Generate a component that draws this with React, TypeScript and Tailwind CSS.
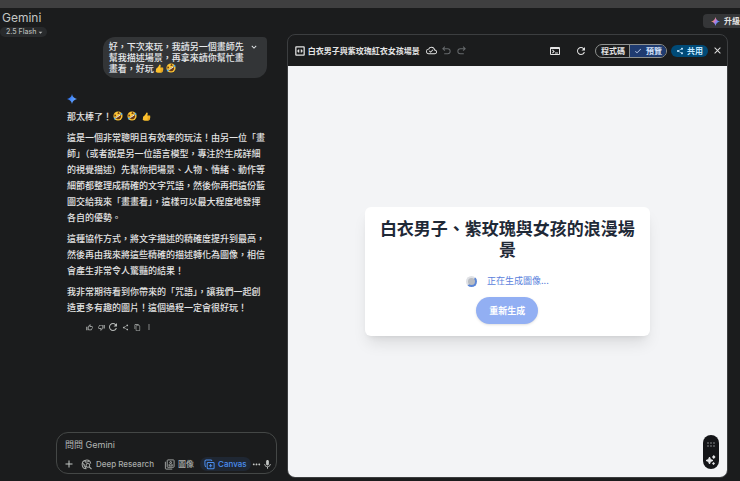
import type { ReactNode } from "react";
import {
	MdAdd,
	MdArrowDropDown,
	MdCheck,
	MdClose,
	MdContentCopy,
	MdKeyboardArrowDown,
	MdMic,
	MdMoreHoriz,
	MdMoreVert,
	MdOutlineCloudDone,
	MdOutlineTerminal,
	MdOutlineThumbDown,
	MdOutlineThumbUp,
	MdRefresh,
	MdShare,
} from "react-icons/md";

const paragraphs = [
	"這是一個非常聰明且有效率的玩法！由另一位「畫師」（或者說是另一位語言模型，專注於生成詳細的視覺描述）先幫你把場景、人物、情緒、動作等細節都整理成精確的文字咒語，然後你再把這份藍圖交給我來「畫畫看」，這樣可以最大程度地發揮各自的優勢。",
	"這種協作方式，將文字描述的精確度提升到最高，然後再由我來將這些精確的描述轉化為圖像，相信會產生非常令人驚豔的結果！",
	"我非常期待看到你帶來的「咒語」，讓我們一起創造更多有趣的圖片！這個過程一定會很好玩！",
];

const replyActions: { label: string; icon: ReactNode }[] = [
	{ label: "喜歡", icon: <MdOutlineThumbUp className="size-[7px]" /> },
	{ label: "不喜歡", icon: <MdOutlineThumbDown className="size-[7px]" /> },
	{ label: "重做", icon: <MdRefresh className="size-3 shrink-0" /> },
	{ label: "分享", icon: <MdShare className="size-[7px]" /> },
	{ label: "複製", icon: <MdContentCopy className="size-[7px]" /> },
	{ label: "更多", icon: <MdMoreVert className="size-2" /> },
];

function Spark({ className, multicolor }: { className: string; multicolor?: boolean }) {
	const id = multicolor ? "spark-multi" : "spark-blue";
	return (
		<svg viewBox="0 0 24 24" className={className} aria-hidden="true">
			<defs>
				<linearGradient id={id} x1="0" y1="0.2" x2="1" y2="0.8">
					<stop offset="0.2" stopColor={multicolor ? "#f0a04f" : "#2f6fe8"} />
					<stop offset="0.45" stopColor={multicolor ? "#c678d8" : "#4a8cf7"} />
					<stop offset="0.75" stopColor={multicolor ? "#4f93f8" : "#5ea0ff"} />
				</linearGradient>
			</defs>
			<path
				fill={`url(#${id})`}
				d="M12 0c1.500 7 5 10.500 12 12-7 1.500-10.500 5-12 12-1.500-7-5-10.500-12-12C7 10.500 10.500 7 12 0Z"
			/>
		</svg>
	);
}

function CodeBoxIcon() {
	return (
		<svg viewBox="0 0 24 24" className="size-[10px] shrink-0" fill="none" stroke="currentColor" strokeWidth="3" aria-hidden="true">
			<rect x="2" y="2" width="20" height="20" rx="1" />
			<path d="m10 8.500-3 3.500 3 3.500M14 8.500l3 3.500-3 3.500" />
		</svg>
	);
}

function UndoIcon({ className }: { className: string }) {
	return (
		<svg viewBox="0 0 24 24" className={className} fill="none" stroke="currentColor" strokeWidth="2.200" aria-hidden="true">
			<path d="M8.500 3.500 4 8l4.500 4.500M4 8h10.500a5.500 5.500 0 0 1 0 11H7" />
		</svg>
	);
}

function ResearchIcon() {
	return (
		<svg viewBox="0 0 24 24" className="size-[11px] shrink-0" fill="none" stroke="currentColor" strokeWidth="2.200" aria-hidden="true">
			<path d="M12 21.500a9.500 9.500 0 1 1 9.300-11.500" />
			<path d="M3 9l4 3v3l3 2v4M8 3.500l2 3.500 5-1 2-2" />
			<circle cx="15" cy="14" r="4" />
			<path d="m18 17 5 5" strokeWidth="2.500" />
		</svg>
	);
}

function ImagesIcon() {
	return (
		<svg viewBox="0 0 24 24" className="size-[11px] shrink-0" fill="none" stroke="currentColor" strokeWidth="2" aria-hidden="true">
			<rect x="7" y="2" width="15" height="16" rx="1.500" />
			<path d="M3 6v14.500c0 1 .5 1.500 1.500 1.500H18" />
			<circle cx="14.500" cy="7.500" r="2" />
			<path d="M11 15v-2.500c0-2.500 7-2.500 7 0V15Z" />
		</svg>
	);
}

function CanvasIcon() {
	return (
		<svg viewBox="0 0 24 24" className="size-[11px] shrink-0" fill="none" stroke="currentColor" strokeWidth="2.200" aria-hidden="true">
			<path d="M4.500 17C2.500 16 2 14.500 2 12V5c0-2 1-3 3-3h9c2 0 3 .5 3.500 2" />
			<rect x="7" y="7.500" width="15" height="14" rx="2" />
			<path d="M14.500 11v7M11 14.500h7" />
		</svg>
	);
}

function ThumbEmoji() {
	return (
		<svg viewBox="0 0 24 24" className="mx-px inline-block size-[9px] align-[-1px]" role="img" aria-label="👍">
			<path fill="#fbc02d" d="M3 12c3-1 5-4 7-7 1-2 1-4 3-4 3 0 3 4 1 8h6c3 0 3 3 1 4 2 1 1 3 0 4 1 1 0 3-1 3 0 2-1 3-4 3H9c-3 0-4-1-7-2Z" />
			<path stroke="#d68a10" strokeWidth="1.500" fill="none" d="M15 13h6M15 17h6M15 20h5" />
		</svg>
	);
}

function RoflEmoji() {
	return (
		<svg viewBox="0 0 24 24" className="mx-px inline-block size-[10px] align-[-1px]" role="img" aria-label="🤣">
			<circle cx="12" cy="12" r="11" fill="#fbc434" />
			<g transform="rotate(-35 12 12)">
				<path fill="#6b3a12" d="M5 12h14c0 5-3 8-7 8s-7-3-7-8Z" />
				<path fill="#fff" d="M6 12h12v2H6Z" />
				<path stroke="#6b3a12" strokeWidth="2" fill="none" d="m5 5 4 2-4 2M19 5l-4 2 4 2" />
				<path fill="#4aa8e8" d="M1 10c3 0 4 2 3 4s-4 1-4-1ZM23 10c-3 0-4 2-3 4s4 1 4-1Z" />
			</g>
		</svg>
	);
}

function ChatColumn() {
	return (
		<section className="flex w-[38.75%] shrink-0 flex-col pb-[7px]">
			<header className="flex flex-col items-start">
				<h1 className="mt-0.5 pl-0.5 text-[12px] leading-4 text-[#c4c7c5]">Gemini</h1>
				<button type="button" className="mt-px flex h-[10px] items-center rounded-full bg-[#282a2c] pl-1.5 pr-0.5 text-[7px] font-medium text-[#b3b6b4]">
					2.5 Flash
					<MdArrowDropDown className="size-[9px]" />
				</button>
			</header>

			<div className="mr-5 flex items-start gap-1 self-end rounded-xl rounded-tr-sm bg-[#333537] py-1 pl-1.5 pr-2 text-[#e8eaed]">
				<p className="w-[136px] text-[9px] font-medium leading-[11px]">
					好，下次來玩，我請另一個畫師先幫我描述場景，再拿來請你幫忙畫畫看，好玩
					<ThumbEmoji />
					<RoflEmoji />
				</p>
				<button type="button" aria-label="展開" className="mt-px">
					<MdKeyboardArrowDown className="size-[10px]" />
				</button>
			</div>

			<article className="mt-4 flex flex-col gap-[5px] pl-[67px] pr-5 text-[9px] font-medium leading-4 text-[#e3e3e3]">
				<Spark className="size-[10px]" />
				<p>
					那太棒了！
					<RoflEmoji /> <RoflEmoji /> <ThumbEmoji />
				</p>
				{paragraphs.map((text) => (
					<p key={text}>{text}</p>
				))}
				<div className="ml-4 flex text-[#b8bbb9]">
					{replyActions.map(({ label, icon }) => (
						<button key={label} type="button" aria-label={label} className="flex size-3 items-center justify-center">
							{icon}
						</button>
					))}
				</div>
			</article>

			<form className="ml-14 mr-[10px] mt-auto flex flex-col gap-1.5 rounded-xl border border-[#444746] px-1.5 pb-0.5 pt-1 text-[#a9acaa]">
				<input
					type="text"
					aria-label="問問 Gemini"
					placeholder="問問 Gemini"
					className="h-3.5 w-full bg-transparent px-0.5 text-[9px] outline-none placeholder:text-[#b3b6b4]"
				/>
				<div className="flex h-3.5 items-center text-[8px] font-medium">
					<button type="button" aria-label="新增">
						<MdAdd className="size-3 text-[#c4c7c5]" />
					</button>
					<button type="button" className="ml-1.5 flex items-center gap-1 whitespace-nowrap">
						<ResearchIcon />
						Deep Research
					</button>
					<button type="button" className="ml-2.5 flex items-center gap-[3px] whitespace-nowrap">
						<ImagesIcon />
						圖像
					</button>
					<button type="button" className="ml-1.5 flex h-3.5 items-center gap-[3px] rounded-full bg-[#1f2733] px-1 text-[#4b8ef0]">
						<CanvasIcon />
						Canvas
					</button>
					<button type="button" aria-label="更多" className="ml-auto text-[#c4c7c5]">
						<MdMoreHoriz className="size-[11px]" />
					</button>
					<button type="button" aria-label="麥克風" className="text-[#c4c7c5]">
						<MdMic className="size-[11px]" />
					</button>
				</div>
			</form>
		</section>
	);
}

function CanvasHeader() {
	return (
		<header className="flex h-[31px] shrink-0 items-center pl-[7px] pr-1 text-[8px] text-[#e3e3e3]">
			<CodeBoxIcon />
			<h2 className="ml-[3px] whitespace-nowrap font-bold">白衣男子與紫玫瑰紅衣女孩場景</h2>
			<MdOutlineCloudDone className="ml-1.5 size-[11px] shrink-0" />
			<div className="ml-1 flex gap-1 text-[#66696c]">
				<button type="button" aria-label="復原">
					<UndoIcon className="size-[11px]" />
				</button>
				<button type="button" aria-label="重做">
					<UndoIcon className="size-[11px] -scale-x-100" />
				</button>
			</div>
			<div className="ml-auto flex items-center">
				<button type="button" aria-label="主控台">
					<MdOutlineTerminal className="size-3" />
				</button>
				<button type="button" aria-label="重新整理" className="ml-3.5">
					<MdRefresh className="size-3" />
				</button>
				<div className="ml-2 flex h-3.5 overflow-hidden rounded-full border border-[#8e918f] font-bold">
					<button type="button" className="border-r border-[#8e918f] pl-[5px] pr-1">
						程式碼
					</button>
					<button type="button" aria-pressed="true" className="flex items-center gap-1 bg-[#1f3b70] pl-1 pr-1 text-[#d3e3fd]">
						<MdCheck className="size-2" />
						預覽
					</button>
				</div>
				<button type="button" className="ml-1 flex h-3 items-center gap-[3px] rounded-full bg-[#004a77] px-[5px] font-bold text-[#c2e7ff]">
					<MdShare className="size-2" />
					共用
				</button>
				<button type="button" aria-label="關閉" className="ml-1">
					<MdClose className="size-[11px]" />
				</button>
			</div>
		</header>
	);
}

function Preview() {
	return (
		<div className="relative flex flex-1 items-center justify-center bg-[#f3f4f6]">
			<div className="flex w-[65%] flex-col items-center rounded-md bg-white px-3 py-3 shadow-lg">
				<h2 className="text-center text-[17px] font-bold leading-[21px] text-[#1f2937]">
					白衣男子、紫玫瑰與女孩的浪漫場景
				</h2>
				<div className="mt-3 flex items-center gap-2.5 text-[9px] leading-4 text-[#5b82dc]">
					<span className="size-[11px] rounded-full border-2 border-[#dfe1e5] border-b-[#5b86d6] border-r-[#5b86d6] bg-[#b9bcc2]" />
					<span>正在生成圖像...</span>
				</div>
				<button type="button" className="mt-2 h-[27px] rounded-full bg-[#92aff3] px-[13px] text-[9px] font-bold text-white shadow-sm">
					重新生成
				</button>
			</div>
			<button type="button" aria-label="Gemini 功能" className="absolute bottom-2 right-2 flex h-[34px] w-4 flex-col items-center justify-between rounded-full bg-[#141518] pb-1 pt-[7px]">
				<svg viewBox="0 0 8 6" className="h-1.5 w-2" fill="#4b4d50" aria-hidden="true">
					<path d="M0 0h2v2H0zM3 0h2v2H3zM6 0h2v2H6zM0 3h2v2H0zM3 3h2v2H3zM6 3h2v2H6z" />
				</svg>
				<svg viewBox="0 0 20 20" className="size-[10px]" fill="#e6e7e9" aria-hidden="true">
					<path d="M7 4c1 4 3 6 7 7-4 1-6 3-7 7-1-4-3-6-7-7 4-1 6-3 7-7Z" stroke="#e6e7e9" strokeWidth="2" />
					<path d="m15.500 0 3.500 4-3.500 4L12 4ZM15 14l3 3-3 3-3-3Z" />
				</svg>
			</button>
		</div>
	);
}

export default function App() {
	return (
		<div className="flex min-h-screen flex-col overflow-hidden bg-[#1b1c1d] font-[Inter,'Noto_Sans_CJK_TC',sans-serif]">
			<div className="h-2 shrink-0 bg-[#3f3f40]" />
			<main className="flex flex-1">
				<ChatColumn />
				<section className="flex min-w-0 flex-1 flex-col pb-[3px]">
					<div className="flex h-[26px] shrink-0 justify-end pt-1.5">
						<button type="button" className="flex h-[14px] items-center gap-1 rounded-l-sm bg-[#353638] pl-2 text-[8px] font-bold text-[#e3e3e3]">
							<Spark className="size-[9px]" multicolor />
							升級
						</button>
					</div>
					<div className="mr-3 flex flex-1 flex-col overflow-hidden rounded-lg border border-[#3c3e40] bg-[#1b1c1d]">
						<CanvasHeader />
						<Preview />
					</div>
				</section>
			</main>
		</div>
	);
}
